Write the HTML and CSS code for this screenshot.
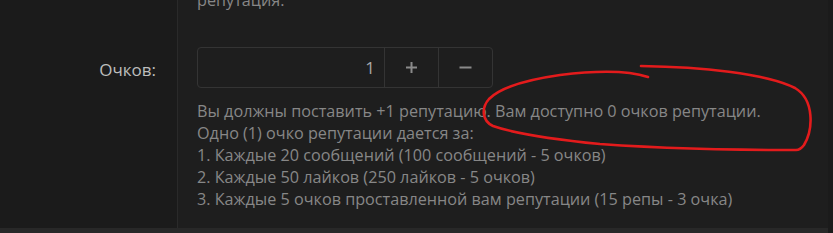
FILE: index.html
```html
<!DOCTYPE html>
<html lang="ru">
<head>
    <meta charset="UTF-8">
    <meta name="viewport" content="width=device-width, initial-scale=1.0">
    <title>Репутация</title>
    <link rel="stylesheet" href="styles.css">
</head>
<body>
    <div class="block">
        <dl class="form-row">
            <dt></dt>
            <dd><p class="explain">репутация.</p></dd>
        </dl>
        <dl class="form-row">
            <dt><label for="points">Очков:</label></dt>
            <dd>
                <div class="input-group">
                    <input type="text" id="points" class="input-num" value="1">
                    <button class="step" type="button" aria-label="Увеличить">
                        <svg width="13" height="13" viewBox="0 0 13 13"><path d="M6.5 1v11M1 6.5h11" stroke="#8a8a8a" stroke-width="2"/></svg>
                    </button>
                    <button class="step" type="button" aria-label="Уменьшить">
                        <svg width="13" height="13" viewBox="0 0 13 13"><path d="M0.5 6.5h12" stroke="#8a8a8a" stroke-width="2"/></svg>
                    </button>
                </div>
                <div class="explain hint">
                    Вы должны поставить +1 репутацию. Вам доступно 0 очков репутации.<br>
                    Одно (1) очко репутации дается за:<br>
                    1. Каждые 20 сообщений (100 сообщений - 5 очков)<br>
                    2. Каждые 50 лайков (250 лайков - 5 очков)<br>
                    3. Каждые 5 очков проставленной вам репутации (15 репы - 3 очка)
                </div>
            </dd>
        </dl>
        <div class="footer-bar"></div>
    </div>

    <!-- hand-drawn marker annotation -->
    <svg class="scribble" width="833" height="233" viewBox="0 0 833 233">
        <path d="M641 66 C700 67, 765 73, 795 88 C815 100, 813 130, 804 145 C801 149, 799 150, 796 150 C740 150, 670 149, 600 144 C550 139, 510 132, 493 126 C482 121, 481 108, 489 99 C500 88, 525 80, 560 75 C600 70, 630 71, 648 77" fill="none" stroke="#e31b1c" stroke-width="2.6" stroke-linecap="round"/>
    </svg>
</body>
</html>
```

FILE: styles.css
```css
body {
    margin: 0;
    padding: 0;
    background-color: #1b1b1b;
    font-family: "Open Sans", "DejaVu Sans", sans-serif;
    font-size: 16.2px;
    color: #bdbdbd;
    overflow: hidden;
}

.block {
    width: 828px;
    margin-top: -29px;
}

.form-row {
    display: grid;
    grid-template-columns: 178px 1fr;
    margin: 0;
}

.form-row dt {
    border-right: 1px solid #2a2a2a;
    padding: 20px 21px 0 0;
    text-align: right;
    line-height: 41px;
}

.form-row dt label {
    color: #bdbdbd;
    font-size: 17px;
}

.form-row dd {
    margin: 0;
    padding: 18px 0 18px 19px;
    background-color: #1e1e1e;
}

.explain {
    margin: 0;
    color: #878787;
    line-height: 22px;
}

.hint {
    margin-top: 12px;
}

.input-group {
    display: flex;
    width: 296px;
    height: 41px;
    box-sizing: border-box;
    border: 1px solid #343434;
    border-radius: 4px;
    overflow: hidden;
}

.input-num {
    width: 186px;
    box-sizing: border-box;
    border: none;
    background: transparent;
    color: #a8a8a8;
    font-family: inherit;
    font-size: 17px;
    text-align: right;
    padding: 0 9px 0 0;
    outline: none;
}

.step {
    display: flex;
    align-items: center;
    justify-content: center;
    width: 55px;
    border: none;
    border-left: 1px solid #343434;
    background: transparent;
    padding: 0;
    cursor: pointer;
}

.footer-bar {
    height: 10px;
    background-color: #282828;
}

.scribble {
    position: absolute;
    top: 0;
    left: 0;
    pointer-events: none;
}
```
